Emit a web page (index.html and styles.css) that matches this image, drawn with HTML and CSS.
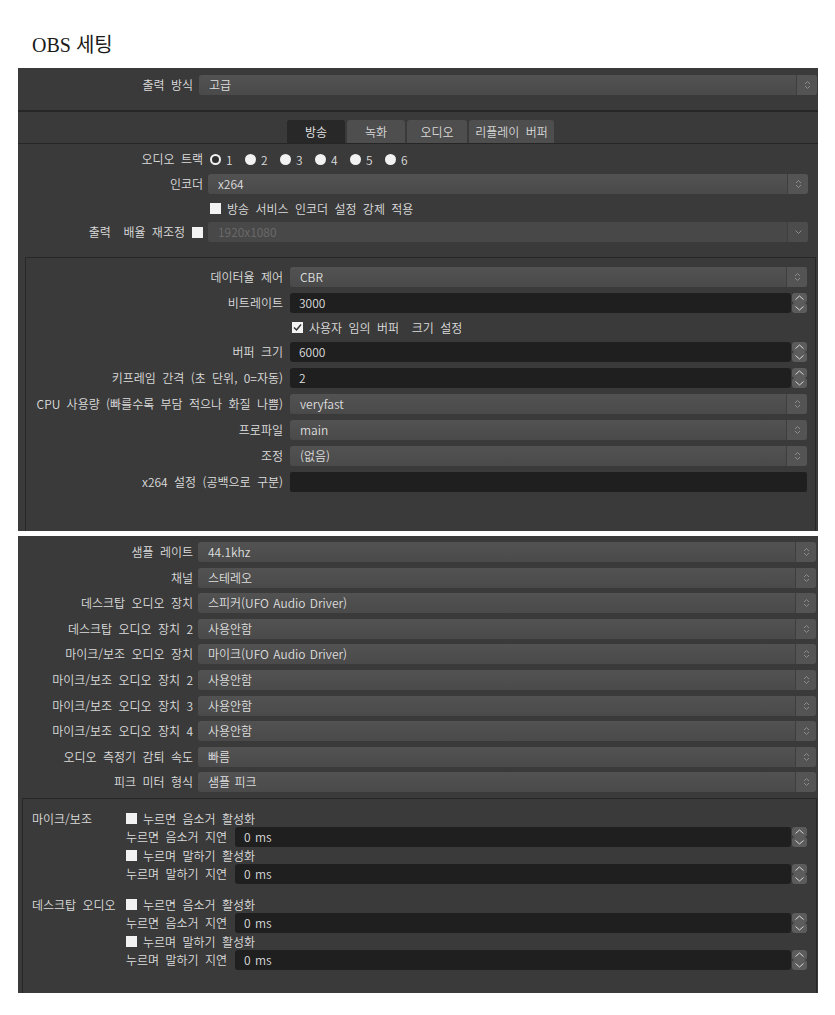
FILE: index.html
```html
<!DOCTYPE html>
<html lang="ko">
<head>
<meta charset="utf-8">
<title>OBS 세팅</title>
<link rel="stylesheet" href="styles.css">
</head>
<body>
<div class="page">
  <h1 class="title">OBS 세팅</h1>

  <div class="shot shot1">
    <div class="form mode">
      <div class="lbl">출력 방식</div>
      <div class="combo"><span class="val">고급</span><span class="arr"><svg width="7" height="12" viewBox="0 0 7 12"><path d="M1 5 3.5 2.5 6 5M1 7 3.5 9.5 6 7"/></svg></span></div>
    </div>
    <div class="sep"></div>
    <div class="tabbar">
      <div class="tab sel w58">방송</div>
      <div class="tab w58">녹화</div>
      <div class="tab w60">오디오</div>
      <div class="tab w85">리플레이 버퍼</div>
    </div>
    <div class="tabpane">
      <div class="form stream">
        <div class="lbl">오디오 트랙</div>
        <div class="radios">
          <span class="radio on"></span><span class="rl">1</span>
          <span class="radio"></span><span class="rl">2</span>
          <span class="radio"></span><span class="rl">3</span>
          <span class="radio"></span><span class="rl">4</span>
          <span class="radio"></span><span class="rl">5</span>
          <span class="radio"></span><span class="rl">6</span>
        </div>
        <div class="lbl">인코더</div>
        <div class="combo"><span class="val">x264</span><span class="arr"><svg width="7" height="12" viewBox="0 0 7 12"><path d="M1 5 3.5 2.5 6 5M1 7 3.5 9.5 6 7"/></svg></span></div>
        <div></div>
        <div class="check"><span class="cb"></span><span>방송 서비스 인코더 설정 강제 적용</span></div>
        <div class="lbl lblcb"><span class="pre">출력  배율 재조정</span><span class="cb"></span></div>
        <div class="combo disabled"><span class="val">1920x1080</span><span class="arr"><svg width="9" height="12" viewBox="0 0 9 12"><path d="M1.5 4.5 4.5 7.5 7.5 4.5"/></svg></span></div>
      </div>

      <div class="group enc">
        <div class="lbl">데이터율 제어</div>
        <div class="combo"><span class="val">CBR</span><span class="arr"><svg width="7" height="12" viewBox="0 0 7 12"><path d="M1 5 3.5 2.5 6 5M1 7 3.5 9.5 6 7"/></svg></span></div>
        <div class="lbl">비트레이트</div>
        <div class="spin"><div class="field">3000</div><div class="btns"><span class="sb"><svg width="15" height="10" viewBox="0 0 15 10"><path d="M3.5 6.5 7.5 3 11.5 6.5"/></svg></span><span class="sb"><svg width="15" height="10" viewBox="0 0 15 10"><path d="M3.5 3.5 7.5 7 11.5 3.5"/></svg></span></div></div>
        <div></div>
        <div class="check"><span class="cb checked"><svg width="11" height="11" viewBox="0 0 11 11"><path d="M2 5.5 4.5 8 9 2.5"/></svg></span><span class="pre">사용자 임의 버퍼  크기 설정</span></div>
        <div class="lbl">버퍼 크기</div>
        <div class="spin"><div class="field">6000</div><div class="btns"><span class="sb"><svg width="15" height="10" viewBox="0 0 15 10"><path d="M3.5 6.5 7.5 3 11.5 6.5"/></svg></span><span class="sb"><svg width="15" height="10" viewBox="0 0 15 10"><path d="M3.5 3.5 7.5 7 11.5 3.5"/></svg></span></div></div>
        <div class="lbl">키프레임 간격 (초 단위, 0=자동)</div>
        <div class="spin"><div class="field">2</div><div class="btns"><span class="sb"><svg width="15" height="10" viewBox="0 0 15 10"><path d="M3.5 6.5 7.5 3 11.5 6.5"/></svg></span><span class="sb"><svg width="15" height="10" viewBox="0 0 15 10"><path d="M3.5 3.5 7.5 7 11.5 3.5"/></svg></span></div></div>
        <div class="lbl">CPU 사용량 (빠를수록 부담 적으나 화질 나쁨)</div>
        <div class="combo"><span class="val">veryfast</span><span class="arr"><svg width="7" height="12" viewBox="0 0 7 12"><path d="M1 5 3.5 2.5 6 5M1 7 3.5 9.5 6 7"/></svg></span></div>
        <div class="lbl">프로파일</div>
        <div class="combo"><span class="val">main</span><span class="arr"><svg width="7" height="12" viewBox="0 0 7 12"><path d="M1 5 3.5 2.5 6 5M1 7 3.5 9.5 6 7"/></svg></span></div>
        <div class="lbl">조정</div>
        <div class="combo"><span class="val">(없음)</span><span class="arr"><svg width="7" height="12" viewBox="0 0 7 12"><path d="M1 5 3.5 2.5 6 5M1 7 3.5 9.5 6 7"/></svg></span></div>
        <div class="lbl">x264 설정 (공백으로 구분)</div>
        <div class="field text"></div>
      </div>
    </div>
  </div>

  <div class="shot shot2">
    <div class="form audio">
      <div class="lbl">샘플 레이트</div>
      <div class="combo"><span class="val">44.1khz</span><span class="arr"><svg width="7" height="12" viewBox="0 0 7 12"><path d="M1 5 3.5 2.5 6 5M1 7 3.5 9.5 6 7"/></svg></span></div>
      <div class="lbl">채널</div>
      <div class="combo"><span class="val">스테레오</span><span class="arr"><svg width="7" height="12" viewBox="0 0 7 12"><path d="M1 5 3.5 2.5 6 5M1 7 3.5 9.5 6 7"/></svg></span></div>
      <div class="lbl">데스크탑 오디오 장치</div>
      <div class="combo"><span class="val">스피커(UFO Audio Driver)</span><span class="arr"><svg width="7" height="12" viewBox="0 0 7 12"><path d="M1 5 3.5 2.5 6 5M1 7 3.5 9.5 6 7"/></svg></span></div>
      <div class="lbl">데스크탑 오디오 장치 2</div>
      <div class="combo"><span class="val">사용안함</span><span class="arr"><svg width="7" height="12" viewBox="0 0 7 12"><path d="M1 5 3.5 2.5 6 5M1 7 3.5 9.5 6 7"/></svg></span></div>
      <div class="lbl">마이크/보조 오디오 장치</div>
      <div class="combo"><span class="val">마이크(UFO Audio Driver)</span><span class="arr"><svg width="7" height="12" viewBox="0 0 7 12"><path d="M1 5 3.5 2.5 6 5M1 7 3.5 9.5 6 7"/></svg></span></div>
      <div class="lbl">마이크/보조 오디오 장치 2</div>
      <div class="combo"><span class="val">사용안함</span><span class="arr"><svg width="7" height="12" viewBox="0 0 7 12"><path d="M1 5 3.5 2.5 6 5M1 7 3.5 9.5 6 7"/></svg></span></div>
      <div class="lbl">마이크/보조 오디오 장치 3</div>
      <div class="combo"><span class="val">사용안함</span><span class="arr"><svg width="7" height="12" viewBox="0 0 7 12"><path d="M1 5 3.5 2.5 6 5M1 7 3.5 9.5 6 7"/></svg></span></div>
      <div class="lbl">마이크/보조 오디오 장치 4</div>
      <div class="combo"><span class="val">사용안함</span><span class="arr"><svg width="7" height="12" viewBox="0 0 7 12"><path d="M1 5 3.5 2.5 6 5M1 7 3.5 9.5 6 7"/></svg></span></div>
      <div class="lbl">오디오 측정기 감퇴 속도</div>
      <div class="combo"><span class="val">빠름</span><span class="arr"><svg width="7" height="12" viewBox="0 0 7 12"><path d="M1 5 3.5 2.5 6 5M1 7 3.5 9.5 6 7"/></svg></span></div>
      <div class="lbl">피크 미터 형식</div>
      <div class="combo"><span class="val">샘플 피크</span><span class="arr"><svg width="7" height="12" viewBox="0 0 7 12"><path d="M1 5 3.5 2.5 6 5M1 7 3.5 9.5 6 7"/></svg></span></div>
    </div>

    <div class="group hotkeys">
      <div class="hk-name">마이크/보조</div>
      <div class="hk-list">
        <div class="check"><span class="cb"></span><span>누르면 음소거 활성화</span></div>
        <div class="hk-row"><span class="hk-lbl">누르면 음소거 지연</span><div class="spin"><div class="field">0 ms</div><div class="btns"><span class="sb"><svg width="15" height="10" viewBox="0 0 15 10"><path d="M3.5 6.5 7.5 3 11.5 6.5"/></svg></span><span class="sb"><svg width="15" height="10" viewBox="0 0 15 10"><path d="M3.5 3.5 7.5 7 11.5 3.5"/></svg></span></div></div></div>
        <div class="check"><span class="cb"></span><span>누르며 말하기 활성화</span></div>
        <div class="hk-row"><span class="hk-lbl">누르며 말하기 지연</span><div class="spin"><div class="field">0 ms</div><div class="btns"><span class="sb"><svg width="15" height="10" viewBox="0 0 15 10"><path d="M3.5 6.5 7.5 3 11.5 6.5"/></svg></span><span class="sb"><svg width="15" height="10" viewBox="0 0 15 10"><path d="M3.5 3.5 7.5 7 11.5 3.5"/></svg></span></div></div></div>
      </div>
      <div class="hk-name">데스크탑 오디오</div>
      <div class="hk-list">
        <div class="check"><span class="cb"></span><span>누르면 음소거 활성화</span></div>
        <div class="hk-row"><span class="hk-lbl">누르면 음소거 지연</span><div class="spin"><div class="field">0 ms</div><div class="btns"><span class="sb"><svg width="15" height="10" viewBox="0 0 15 10"><path d="M3.5 6.5 7.5 3 11.5 6.5"/></svg></span><span class="sb"><svg width="15" height="10" viewBox="0 0 15 10"><path d="M3.5 3.5 7.5 7 11.5 3.5"/></svg></span></div></div></div>
        <div class="check"><span class="cb"></span><span>누르며 말하기 활성화</span></div>
        <div class="hk-row"><span class="hk-lbl">누르며 말하기 지연</span><div class="spin"><div class="field">0 ms</div><div class="btns"><span class="sb"><svg width="15" height="10" viewBox="0 0 15 10"><path d="M3.5 6.5 7.5 3 11.5 6.5"/></svg></span><span class="sb"><svg width="15" height="10" viewBox="0 0 15 10"><path d="M3.5 3.5 7.5 7 11.5 3.5"/></svg></span></div></div></div>
      </div>
    </div>
  </div>
</div>
</body>
</html>
```

FILE: styles.css
```css
* { box-sizing: border-box; }

body {
  margin: 0;
  background: #ffffff;
  font-family: "Noto Sans CJK KR", "Noto Sans", sans-serif;
  font-size: 12px;
  font-weight: 350;
  word-spacing: 3px;
  color: #dcdcdc;
}

.page { padding-left: 18px; }

.title {
  margin: 0 0 0 14px;
  height: 68px;
  padding-top: 30px;
  font-family: "Liberation Serif", "Noto Sans CJK KR", serif;
  font-weight: normal;
  font-size: 20px;
  line-height: 30px;
  word-spacing: 0;
  color: #1a1a1a;
}

.shot {
  width: 800px;
  background: #3a3a3a;
  overflow: hidden;
}
.shot1 { height: 463px; }
.shot2 { height: 457px; margin-top: 5px; }

.pre { white-space: pre; }

/* generic form grid */
.form, .group.enc {
  display: grid;
  align-items: center;
}
.lbl {
  text-align: right;
  white-space: pre;
  line-height: 20px;
}
.lblcb {
  display: flex;
  justify-content: flex-end;
  align-items: center;
  gap: 7px;
}

.mode {
  grid-template-columns: 175px 1fr;
  column-gap: 6px;
  padding: 7px 1px 15px 0;
}

.sep { height: 2px; background: #262626; }

.tabbar {
  display: flex;
  gap: 2px;
  height: 31px;
  padding: 8px 0 0 269px;
}
.tab {
  height: 23px;
  border-radius: 3px 3px 0 0;
  background: #4e4e4e;
  display: flex;
  align-items: center;
  justify-content: center;
  color: #d8d8d8;
}
.tab.sel { background: #282828; color: #e6e6e6; }
.w58 { width: 58px; }
.w60 { width: 60px; }
.w85 { width: 85px; }

.tabpane {
  border-top: 1px solid #262626;
  padding: 6px 2px 0 7px;
}

.stream {
  grid-template-columns: 178px 1fr;
  grid-template-rows: 18px 20px 16px 20px;
  column-gap: 5px;
  row-gap: 6px;
  padding-right: 8px;
}

.radios {
  display: flex;
  align-items: center;
  height: 18px;
  padding-left: 2px;
}
.radio {
  width: 11px;
  height: 11px;
  border-radius: 50%;
  background: #f2f2f2;
}
.radio.on {
  background: #2e2e2e;
  border: 2px solid #f2f2f2;
}
.rl { width: 24px; padding-left: 5px; color: #dcdcdc; }

.check {
  display: flex;
  align-items: center;
  gap: 6px;
  height: 16px;
  padding-left: 2px;
  white-space: nowrap;
}
.cb {
  display: inline-block;
  width: 11px;
  height: 11px;
  background: #f2f2f2;
  flex: none;
}
.cb svg { display: block; }
.cb.checked svg path { fill: none; stroke: #333333; stroke-width: 1.5; }

.combo {
  display: flex;
  height: 20px;
  border-radius: 3px;
  background: linear-gradient(#525252, #4a4a4a);
}
.combo .val {
  flex: 1;
  padding-left: 10px;
  line-height: 20px;
  color: #dedede;
  white-space: nowrap;
  word-spacing: 1px;
}
.combo .arr {
  width: 21px;
  border-left: 1px solid #3e3e3e;
  border-radius: 0 3px 3px 0;
  background: #545454;
  display: flex;
  align-items: center;
  justify-content: center;
}
.combo .arr svg path { fill: none; stroke: #8c8c8c; stroke-width: 1; }
.combo.disabled { background: #484848; }
.combo.disabled .val { color: #6c6c6c; }
.combo.disabled .arr { background: #4c4c4c; }

.group {
  border: 1px solid #272727;
}
.group.enc {
  margin-top: 15px;
  height: 400px;
  grid-template-columns: 257px 1fr;
  grid-auto-rows: 20px;
  grid-template-rows: 20px 20px 17px;
  align-content: start;
  column-gap: 7px;
  row-gap: 6px;
  padding: 9px 8px 0 0;
}

.spin {
  display: flex;
  height: 20px;
  gap: 1px;
}
.field {
  flex: 1;
  height: 20px;
  background: #1f1f1f;
  border-radius: 3px;
  padding-left: 9px;
  line-height: 20px;
  color: #dedede;
  word-spacing: 1px;
}
.field.text { border-radius: 2px; }
.btns {
  width: 15px;
  display: flex;
  flex-direction: column;
}
.sb {
  height: 10px;
  background: #5c5c5c;
  border-radius: 3px;
}
.sb svg { display: block; }
.sb svg path { fill: none; stroke: #d6d6d6; stroke-width: 1; }

.audio {
  grid-template-columns: 175px 1fr;
  grid-auto-rows: 20px;
  column-gap: 5px;
  row-gap: 5.6px;
  padding: 6px 2px 0 0;
}

.hotkeys {
  margin: 5.6px 1px 0 4px;
  height: 220px;
  border-bottom: none;
  padding: 11px 9px 0 9px;
  display: grid;
  grid-template-columns: 88px 1fr;
  column-gap: 6px;
  row-gap: 12px;
  align-content: start;
}
.hk-name {
  line-height: 17px;
  white-space: nowrap;
}
.hk-list {
  display: flex;
  flex-direction: column;
}
.hk-list .check { height: 17px; padding-left: 0; }
.hk-row {
  display: grid;
  grid-template-columns: 109px 1fr;
  align-items: center;
  height: 20px;
}
.hk-lbl { white-space: nowrap; }
```
